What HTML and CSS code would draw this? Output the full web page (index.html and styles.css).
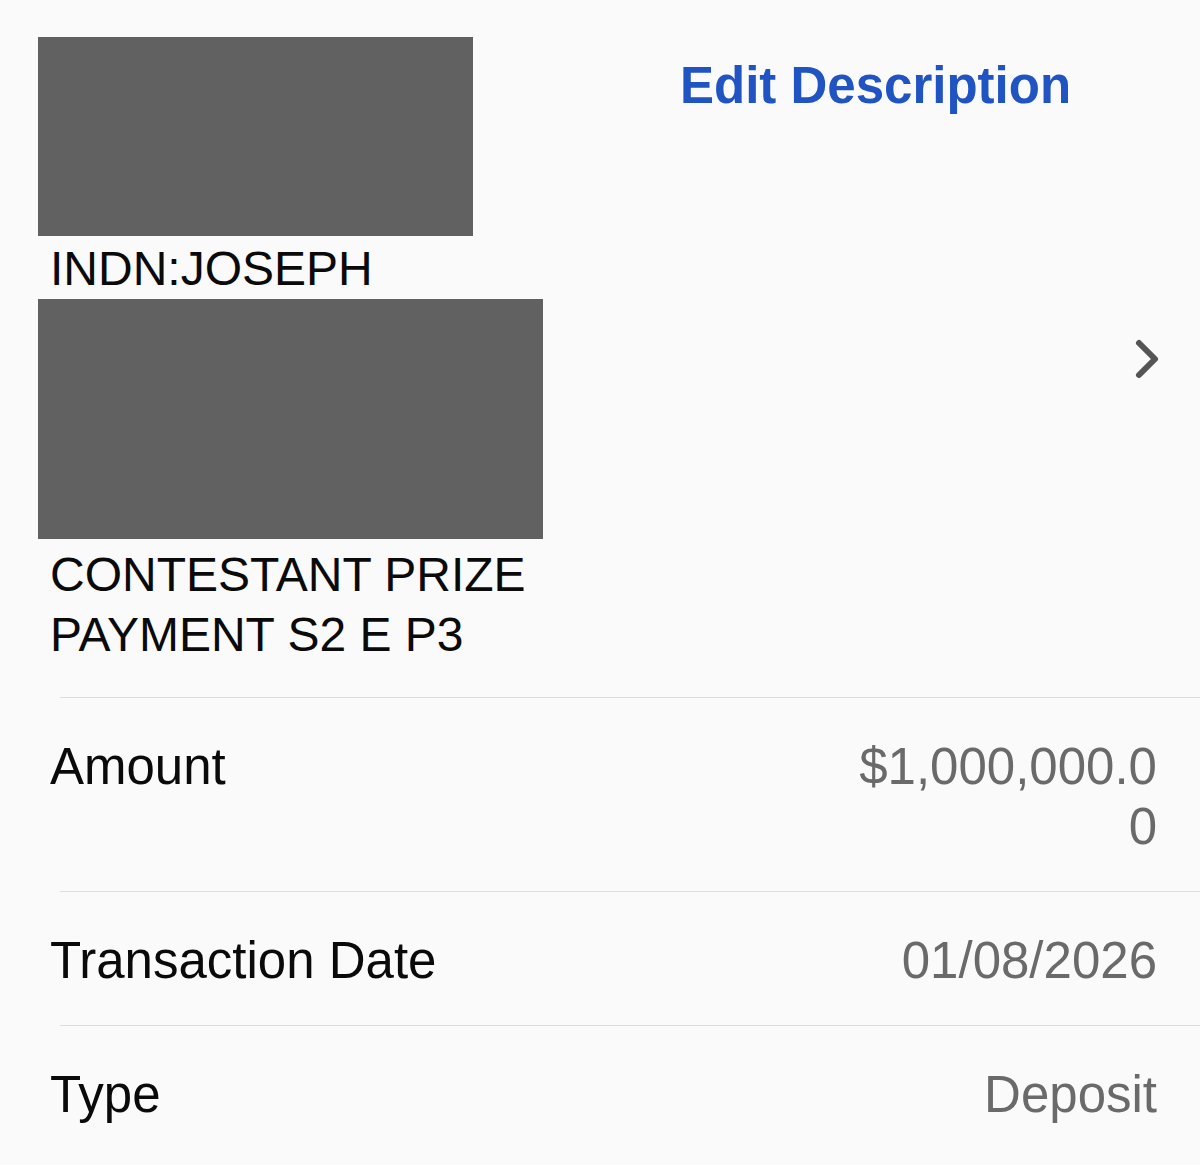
FILE: index.html
```html
<!DOCTYPE html>
<html lang="en">
<head>
  <meta charset="UTF-8" />
  <meta name="viewport" content="width=device-width, initial-scale=1.0" />
  <title>Transaction Details</title>
  <link rel="stylesheet" href="styles.css">
</head>
<body>
  <section class="summary">
    <div class="desc">
      <div class="redact redact-top"></div>
      <p class="desc-line desc-name">INDN:JOSEPH</p>
      <div class="redact redact-mid"></div>
      <p class="desc-line desc-memo">CONTESTANT PRIZE PAYMENT S2 E P3</p>
    </div>
    <div class="actions">
      <a class="edit" href="#">Edit Description</a>
      <svg class="chevron" width="28" height="44" viewBox="0 0 28 44">
        <path d="M6 6 L22 22 L6 38" fill="none" stroke="#555555" stroke-width="6" stroke-linecap="round" stroke-linejoin="round" />
      </svg>
    </div>
  </section>

  <div class="sep"></div>
  <div class="row">
    <span class="label">Amount</span>
    <span class="value">$1,000,000.00</span>
  </div>
  <div class="sep"></div>
  <div class="row">
    <span class="label">Transaction Date</span>
    <span class="value">01/08/2026</span>
  </div>
  <div class="sep"></div>
  <div class="row">
    <span class="label">Type</span>
    <span class="value">Deposit</span>
  </div>
</body>
</html>
```

FILE: styles.css
```css
body {
  margin: 0;
  background: #fafafa;
  font-family: "Liberation Sans", Arial, sans-serif;
  color: #0a0a0a;
}
.summary {
  display: flex;
  padding: 37px 43px 32px 38px;
}
.desc {
  width: 505px;
}
.redact {
  background: #616161;
}
.redact-top {
  width: 435px;
  height: 199px;
}
.redact-mid {
  width: 505px;
  height: 240px;
}
.desc-line {
  margin: 0;
  padding-left: 12px;
  font-size: 48px;
  line-height: 60px;
}
.desc-name {
  margin-top: 3px;
}
.desc-memo {
  margin-top: 6px;
}
.actions {
  flex: 1;
  display: flex;
  flex-direction: column;
  align-items: flex-start;
  padding-left: 137px;
}
.edit {
  margin-top: 19px;
  font-size: 51px;
  line-height: 60px;
  font-weight: bold;
  color: #2054c2;
  text-decoration: none;
}
.chevron {
  align-self: flex-end;
  margin-top: 221px;
  margin-right: -4px;
}
.sep {
  margin-left: 60px;
  height: 1px;
  background: #dddddd;
}
.row {
  display: flex;
  justify-content: space-between;
  align-items: flex-start;
  padding: 39px 43px 34px 50px;
  font-size: 51px;
  line-height: 60px;
}
.value {
  max-width: 305px;
  text-align: right;
  word-break: break-all;
  color: #6a6a6a;
}
```
